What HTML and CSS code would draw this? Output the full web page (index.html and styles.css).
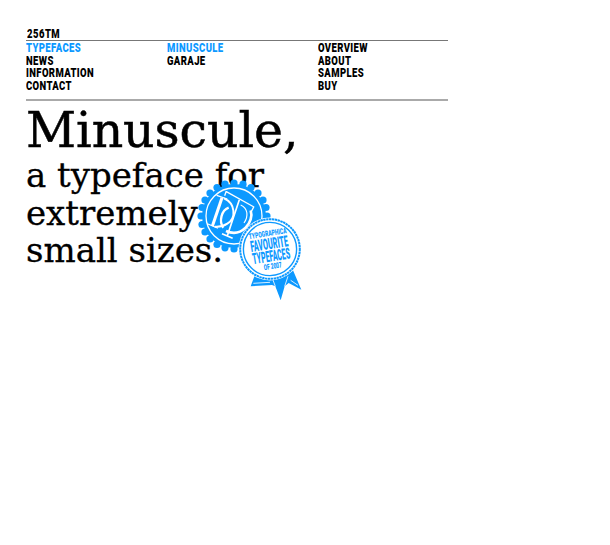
FILE: index.html
```html
<!DOCTYPE html>
<html lang="en">
<head>
<meta charset="utf-8">
<title>Minuscule</title>
<link rel="stylesheet" href="styles.css">
</head>
<body>
<div class="page">
  <div class="brand"><span class="squeeze">256TM</span></div>
  <nav class="nav">
    <ul class="col col-a">
      <li class="on"><span class="squeeze">TYPEFACES</span></li><li><span class="squeeze">NEWS</span></li><li><span class="squeeze">INFORMATION</span></li><li><span class="squeeze">CONTACT</span></li>
    </ul>
    <ul class="col col-b">
      <li class="on"><span class="squeeze">MINUSCULE</span></li><li><span class="squeeze">GARAJE</span></li>
    </ul>
    <ul class="col col-c">
      <li><span class="squeeze">OVERVIEW</span></li><li><span class="squeeze">ABOUT</span></li><li><span class="squeeze">SAMPLES</span></li><li><span class="squeeze">BUY</span></li>
    </ul>
  </nav>
  <div class="hero">
    <h1 class="title">Minuscule,</h1>
    <p class="sub">a typeface for<br>extremely<br>small sizes.</p>
    <svg class="badges" viewBox="0 0 120 125" width="120" height="125" aria-hidden="true">
      <g fill="#0d99ff">
        <circle cx="44" cy="37" r="32"/>
        <circle cx="44" cy="4" r="3.6"/><circle cx="53" cy="5.2" r="3.6"/><circle cx="61" cy="8.5" r="3.6"/><circle cx="68" cy="14" r="3.6"/><circle cx="73" cy="21" r="3.6"/><circle cx="76" cy="28.5" r="3.6"/><circle cx="77" cy="37" r="3.6"/><circle cx="76" cy="45.5" r="3.6"/><circle cx="73" cy="53" r="3.6"/><circle cx="68" cy="60" r="3.6"/><circle cx="61" cy="65.5" r="3.6"/><circle cx="53" cy="68.8" r="3.6"/><circle cx="44" cy="70" r="3.6"/><circle cx="35" cy="68.8" r="3.6"/><circle cx="27" cy="65.5" r="3.6"/><circle cx="20" cy="60" r="3.6"/><circle cx="15" cy="53" r="3.6"/><circle cx="12" cy="45.5" r="3.6"/><circle cx="11" cy="37" r="3.6"/><circle cx="12" cy="28.5" r="3.6"/><circle cx="15" cy="21" r="3.6"/><circle cx="20" cy="14" r="3.6"/><circle cx="27" cy="8.5" r="3.6"/><circle cx="35" cy="5.2" r="3.6"/>
      </g>
      <circle cx="44" cy="37" r="28" fill="none" stroke="#fff" stroke-width="1.3"/>
      <g class="mono" transform="translate(8 2) scale(.3333)" fill="none" stroke="#fff" stroke-linecap="butt">
        <path stroke-width="4" d="M85 32 168 78M85 30 80 44M168 76 161 90"/>
        <path stroke-width="5" d="M124 56 88 164M72 158 104 172"/>
        <path stroke-width="9" d="M72 50 43 136"/>
        <path stroke-width="3.5" d="M56 43 88 54M28 128 60 142"/>
        <path stroke-width="6" d="M78 52C112 66 116 112 88 128 76 136 62 138 50 137"/>
        <path stroke-width="7" d="M92 80C70 88 62 122 76 140"/>
        <path stroke-width="8" d="M158 88C170 122 130 172 84 150"/>
        <path stroke-width="3.5" d="M128 72C150 82 152 106 138 126"/>
      </g>
      <g transform="translate(48 38) scale(.3333)">
        <path fill="#0d99ff" d="M52 170 38 208 102 204 112 208 128 250 140 208 152 198 190 218 165 160Z"/>
        <path fill="none" stroke="#fff" stroke-width="2.5" d="M46 199 96 196M100 176 112 208M150 178 140 208M158 190 180 205"/>
      </g>
      <circle cx="80" cy="70" r="31.5" fill="#fff"/>
      <circle cx="80" cy="70" r="29.8" fill="#fff" stroke="#0d99ff" stroke-width="2" stroke-dasharray="2.4 .5"/>
      <circle cx="80" cy="70" r="26.6" fill="none" stroke="#0d99ff" stroke-width="1.4"/>
      <g class="stamp" transform="rotate(-9 80 70)">
        <text x="80" y="57" class="s1" textLength="38" lengthAdjust="spacingAndGlyphs">TYPOGRAPHICA</text>
        <text x="80" y="70" class="s2" textLength="38" lengthAdjust="spacingAndGlyphs">FAVOURITE</text>
        <text x="80" y="82.5" class="s2" textLength="38" lengthAdjust="spacingAndGlyphs">TYPEFACES</text>
        <text x="80" y="90" class="s1" textLength="18" lengthAdjust="spacingAndGlyphs">OF 2007</text>
      </g>
    </svg>
  </div>
</div>
</body>
</html>
```
FILE: styles.css
```css
* { box-sizing: border-box; }
html, body { margin: 0; padding: 0; background: #fff; }
body { color: #000; }
.page { width: 422px; margin-left: 26px; padding-top: 28px; }
.squeeze { display: inline-block; transform: scaleX(.76); transform-origin: left center; }
.brand {
  font: 900 12.5px/12px Roboto, sans-serif;
  padding-left: 1px;
  height: 12px;
  letter-spacing: .6px;
}
.nav {
  display: grid;
  grid-template-columns: 141px 151px 1fr;
  border-top: 1px solid #777;
  border-bottom: 2px solid #aaa;
  height: 61px;
  padding-top: 1px;
}
.col { list-style: none; margin: 0; padding: 0; }
.col li {
  font: 900 12.5px/12.6px Roboto, sans-serif;
  letter-spacing: .5px;
  white-space: nowrap;
  height: 12.6px;
}
.col .on { color: #0d99ff; }
.hero { position: relative; height: 300px; }
.title {
  margin: 0;
  padding-top: 1px;
  font: normal 49px/58px "DejaVu Serif", serif;
  letter-spacing: -.1px;
  -webkit-text-stroke: .5px #000;
}
.sub {
  margin: 0;
  margin-top: -3px;
  font: normal 34px/37.5px "DejaVu Serif", serif;
  -webkit-text-stroke: .3px #000;
}
.badges { position: absolute; left: 164px; top: 78px; }
.stamp text { fill: #0d99ff; text-anchor: middle; font-family: Roboto, sans-serif; font-weight: 900; }
.s1 { font-size: 8px; }
.s2 { font-size: 15.5px; }
```
